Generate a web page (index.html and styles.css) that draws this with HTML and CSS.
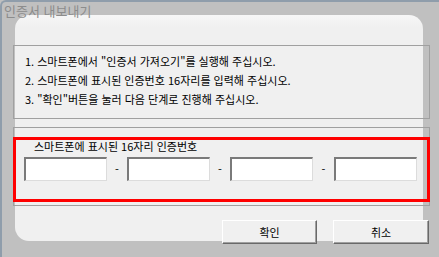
FILE: index.html
```html
<!DOCTYPE html>
<html lang="ko">
<head>
<meta charset="utf-8">
<title>인증서 내보내기</title>
<link rel="stylesheet" href="styles.css">
</head>
<body>
<div class="window">
  <div class="title">인증서 내보내기</div>
  <div class="panel">
    <div class="box info">
      <p>1. 스마트폰에서 "인증서 가져오기"를 실행해 주십시오.</p>
      <p>2. 스마트폰에 표시된 인증번호 16자리를 입력해 주십시오.</p>
      <p>3. "확인"버튼을 눌러 다음 단계로 진행해 주십시오.</p>
    </div>
    <div class="box entry">
      <div class="highlight">
        <div class="label">스마트폰에 표시된 16자리 인증번호</div>
        <div class="fields">
          <input class="field" type="text">
          <span class="dash">-</span>
          <input class="field" type="text">
          <span class="dash">-</span>
          <input class="field" type="text">
          <span class="dash wide">-</span>
          <input class="field" type="text">
        </div>
      </div>
    </div>
    <div class="actions">
      <button class="btn" type="button">확인</button>
      <button class="btn" type="button">취소</button>
    </div>
  </div>
</div>
</body>
</html>
```
FILE: styles.css
```css
html, body {
  margin: 0;
  padding: 0;
}
body {
  width: 439px;
  height: 257px;
  overflow: hidden;
  background: #c0c0c0;
  font-family: "Noto Sans CJK KR", "Noto Sans", sans-serif;
  color: #000;
}
.window {
  box-sizing: border-box;
  height: 257px;
  border-top: 2px solid #8f9dab;
  border-left: 2px solid #8f9dab;
  border-top-left-radius: 6px;
  background: #c0c0c0;
}
.title {
  height: 13px;
  padding-left: 2px;
  font-size: 13px;
  line-height: 18px;
  color: #8c8c8c;
  white-space: nowrap;
}
.panel {
  box-sizing: border-box;
  margin-left: 13px;
  width: 408px;
  height: 226px;
  padding-top: 30px;
  border-radius: 14px;
  background: linear-gradient(#f6f6f6, #f0f0f0 12px);
}
.box {
  box-sizing: border-box;
  margin-left: -2px;
  width: 417px;
  border: 1px solid #a0a0a0;
}
.info {
  height: 74px;
  padding: 6px 0 0 11px;
}
.info p {
  margin: 0;
  font-size: 11px;
  line-height: 19px;
  white-space: nowrap;
}
.entry {
  margin-top: 8px;
  height: 79px;
  padding-top: 9px;
}
.highlight {
  box-sizing: border-box;
  margin: 0 -1px;
  height: 65px;
  border: 3px solid #ff0000;
}
.label {
  padding-left: 18px;
  font-size: 11px;
  line-height: 12px;
  white-space: nowrap;
}
.fields {
  display: flex;
  align-items: center;
  margin-top: 5px;
  padding-left: 8px;
}
.field {
  box-sizing: border-box;
  width: 83px;
  height: 24px;
  margin: 0;
  padding: 0 3px;
  background: #fff;
  border-style: solid;
  border-width: 2px 1px 1px 2px;
  border-color: #7a7a7a #dcdcdc #dcdcdc #7a7a7a;
  outline: none;
}
.dash {
  width: 20px;
  text-align: center;
  font-size: 11px;
  line-height: 24px;
}
.dash.wide {
  width: 21px;
}
.actions {
  display: flex;
  justify-content: flex-end;
  gap: 16px;
  margin-top: 14px;
  margin-right: -6px;
}
.btn {
  box-sizing: border-box;
  width: 95px;
  height: 24px;
  margin: 0;
  padding: 0;
  font-family: "Noto Sans CJK KR", sans-serif;
  font-size: 11px;
  color: #000;
  background: #f0f0f0;
  border: 1px solid;
  border-color: #ffffff #696969 #696969 #ffffff;
  box-shadow: inset -1px -1px 0 #a0a0a0;
}
.btn:last-child {
  width: 96px;
}
```
